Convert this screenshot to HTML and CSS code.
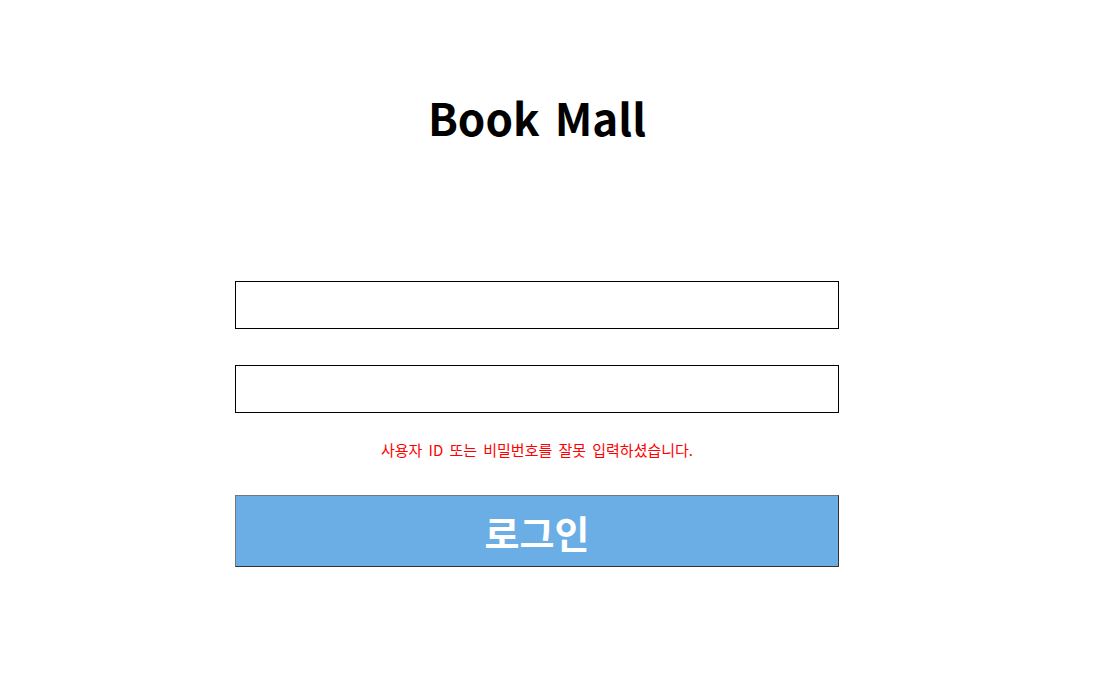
FILE: index.html
```html
<!DOCTYPE html>
<html lang="ko">

<head>
    <meta charset="UTF-8">
    <meta name="viewport" content="width=device-width, initial-scale=1.0">
    <title>Book Mall</title>
    <link rel="stylesheet" href="styles.css">
</head>

<body>
    <div class="login-container">
        <h1 class="title">Book Mall</h1>
        <form class="login-form">
            <input type="text" class="login-input" id="userId">
            <input type="password" class="login-input" id="userPw">
            <p class="error-msg">사용자 ID 또는 비밀번호를 잘못 입력하셨습니다.</p>
            <button type="submit" class="login-btn">로그인</button>
        </form>
    </div>
</body>

</html>
```

FILE: styles.css
```css
body {
    margin: 0;
    background-color: #fff;
    font-family: "Noto Sans CJK KR", "Noto Sans", sans-serif;
}

.login-container {
    width: 604px;
    margin-left: 235px;
    padding-top: 86px;
}

.title {
    margin: 0;
    text-align: center;
    font-size: 44px;
    font-weight: bold;
    line-height: 62px;
    word-spacing: 3px;
    color: #000;
}

.login-form {
    margin-top: 133px;
    display: flex;
    flex-direction: column;
}

.login-input {
    height: 48px;
    box-sizing: border-box;
    border: 1px solid #000;
    margin: 0 0 36px 0;
    padding: 0 10px;
    font-size: 16px;
    outline: none;
}

.login-input + .error-msg {
    margin-top: -9px;
}

.error-msg {
    margin: 0 0 35px 0;
    text-align: center;
    color: #ff0000;
    font-size: 15px;
    line-height: 20px;
    word-spacing: 2px;
}

.login-btn {
    height: 72px;
    box-sizing: border-box;
    background-color: #6aaee5;
    border: 1px solid #767676;
    border-right-color: #333;
    border-bottom-color: #333;
    color: #fff;
    font-family: "Noto Sans CJK KR", sans-serif;
    font-size: 38px;
    font-weight: bold;
    cursor: pointer;
}
```
